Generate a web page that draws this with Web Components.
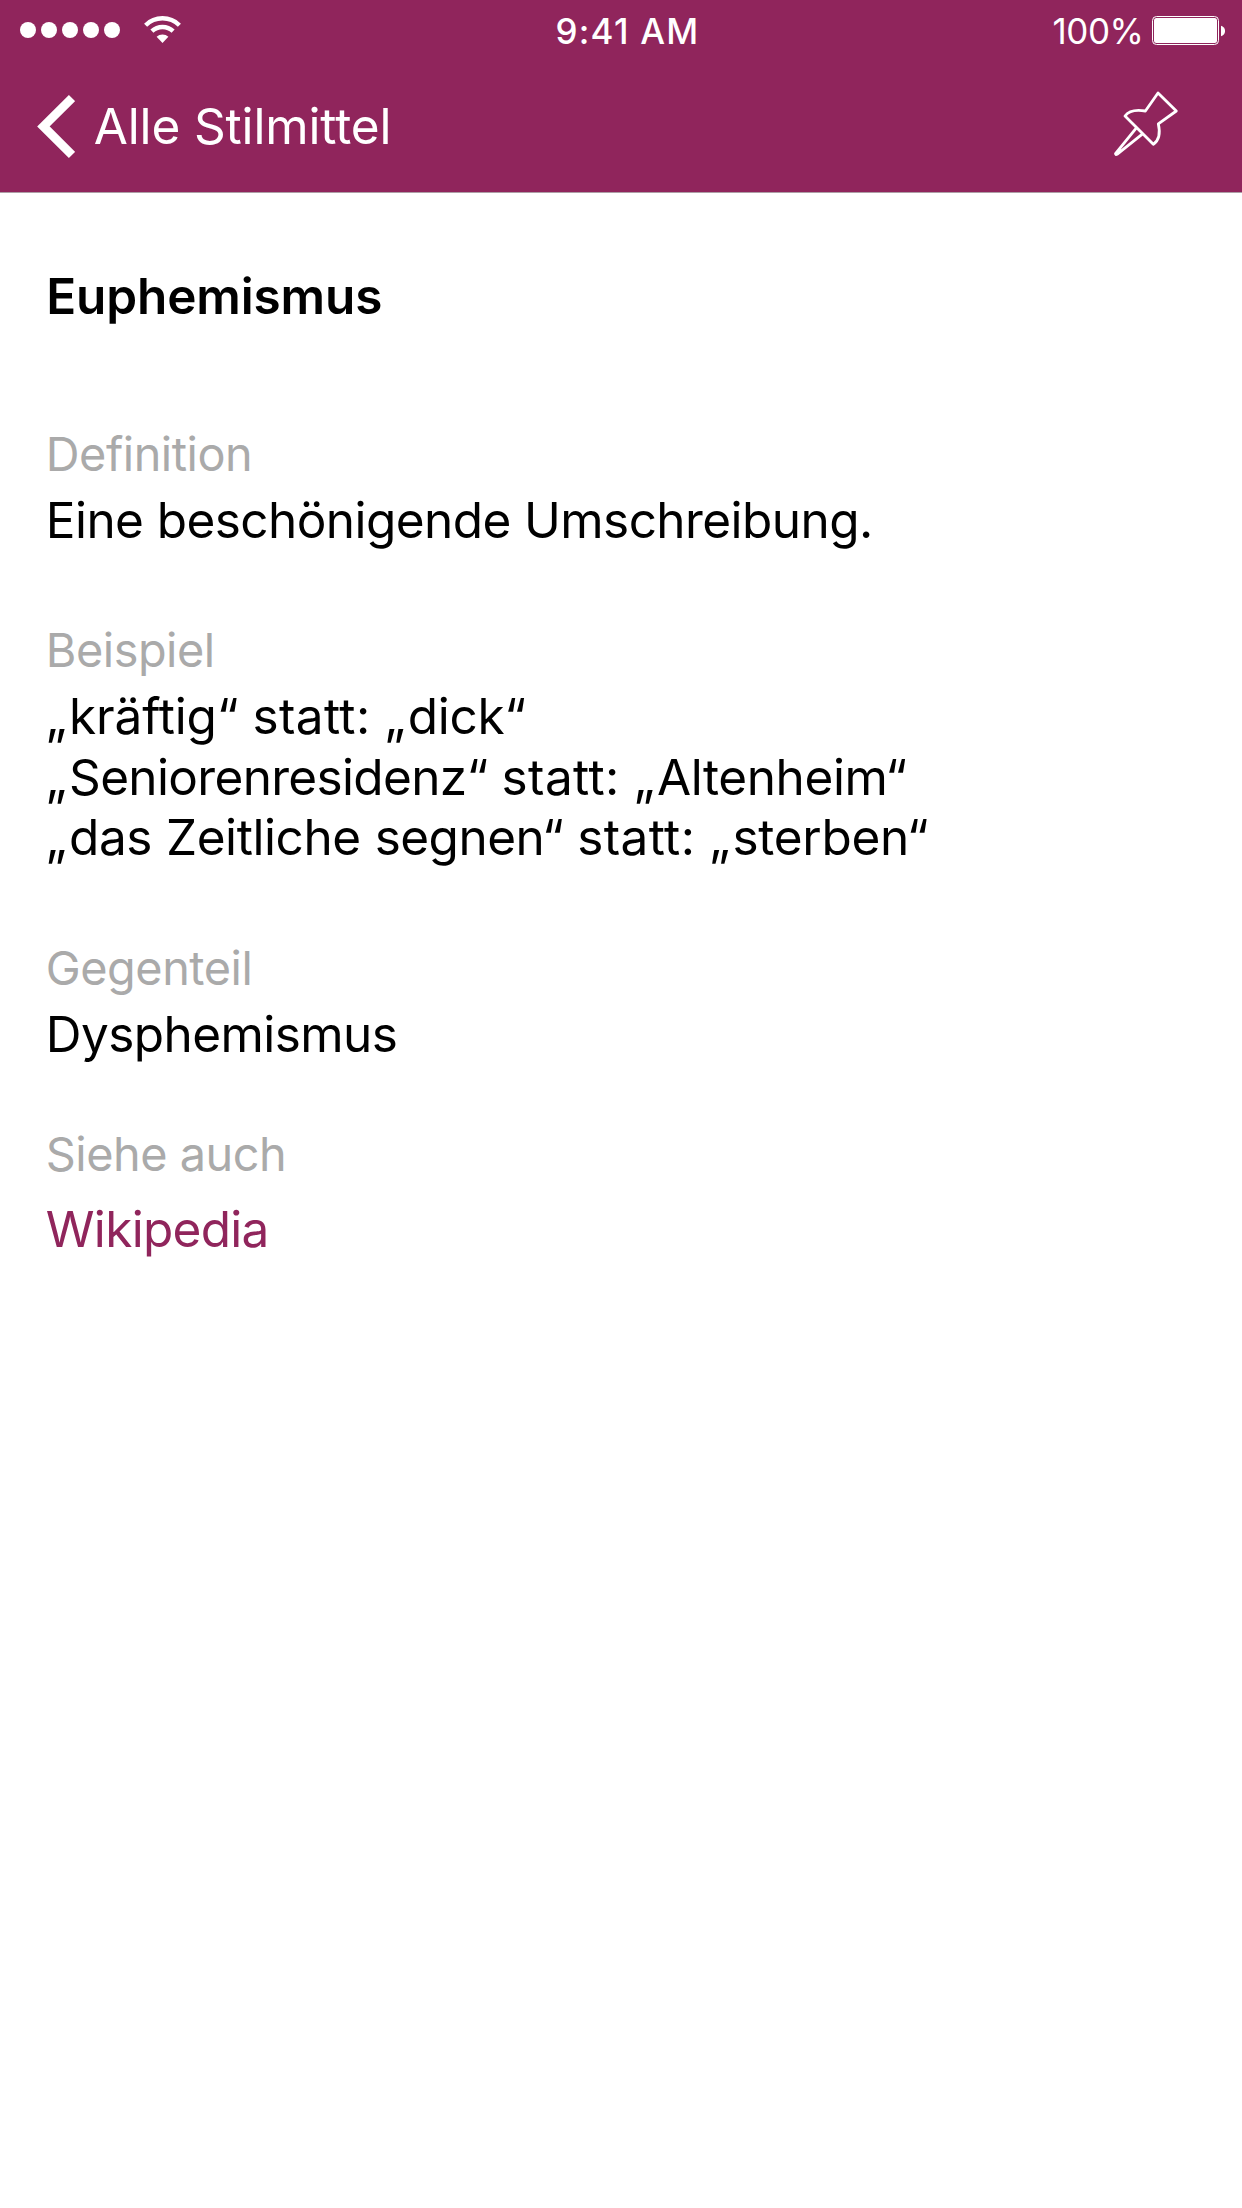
<!DOCTYPE html>
<html lang="de">
<head>
<meta charset="utf-8">
<title>Euphemismus</title>
<style>
html,body{margin:0;background:#fff}
</style>
</head>
<body>
<stil-page>
  <status-bar slot="top" time="9:41 AM" charge="100%"></status-bar>
  <nav-bar slot="top">Alle Stilmittel</nav-bar>
  <entry-title>Euphemismus</entry-title>
  <entry-section label="Definition">Eine beschönigende Umschreibung.</entry-section>
  <entry-section label="Beispiel" style="--gap:70px">
    <quote-line><word-run track="-.14" open>kräftig“</word-run> <word-run track=".4">statt:</word-run> <word-run track="-.3" open>dick“</word-run></quote-line>
    <quote-line><word-run track="-.66" open>Seniorenresidenz“</word-run> <word-run track=".4">statt:</word-run> <word-run track="-.4" open>Altenheim“</word-run></quote-line>
    <quote-line><word-run track="-.43" open>das</word-run> <word-run track="-.42">Zeitliche</word-run> <word-run track="-.52">segnen“</word-run> <word-run track=".4">statt:</word-run> <word-run track="-.29" open>sterben“</word-run></quote-line>
  </entry-section>
  <entry-section label="Gegenteil" style="--gap:70.5px">Dysphemismus</entry-section>
  <entry-section label="Siehe auch" style="--gap:60px;--inner:15px;--ink:#90255c;--track:-.7px">Wikipedia</entry-section>
</stil-page>
<script>
const define=(name,html,setup)=>customElements.define(name,class extends HTMLElement{
  constructor(){
    super();
    const t=document.createElement('template');
    t.innerHTML=html;
    this.attachShadow({mode:'open'}).append(t.content.cloneNode(true));
  }
  connectedCallback(){ if(setup) setup(this,this.shadowRoot); }
});

define('stil-page',`
<style>
:host{display:block;width:1242px;height:2208px;background:#fff;color:#000;font:400 49.5px/60px Inter,"Liberation Sans",sans-serif;white-space:nowrap}
header{background:#90255c;border-bottom:1px solid #ad9fa6;color:#fff;height:192px}
main{padding:73px 45px 0 45.8px}
</style>
<header><slot name="top"></slot></header>
<main><slot></slot></main>`);

define('status-bar',`
<style>
:host{display:grid;grid-template-columns:1fr auto 1fr;height:62px;font-size:35px;line-height:62px}
.left,.right{display:flex;align-items:flex-start}
.left{padding-left:20px}
.right{justify-content:flex-end;padding-right:17px}
.time{font-weight:500;letter-spacing:1.25px;margin-left:13px}
.charge{letter-spacing:-.45px;margin-right:8.5px}
svg{display:block;fill:#fff}
</style>
<div class="left">
<svg width="166" height="62" viewBox="20 0 166 62">
<circle cx="28" cy="30" r="8"/><circle cx="49" cy="30" r="8"/><circle cx="70" cy="30" r="8"/><circle cx="91" cy="30" r="8"/><circle cx="112" cy="30" r="8"/>
<g fill="none" stroke="#fff" stroke-width="4.4"><path d="M145.600 25.200a24.200 24.200 0 0 1 33.800 0"/><path d="M151.900 31.200a15.400 15.400 0 0 1 21.200 0"/></g>
<path d="M156.600 36.800a8.600 8.600 0 0 1 11.800 0L162.500 43z"/>
</svg></div>
<span class="time"></span>
<div class="right"><span class="charge"></span>
<svg width="73" height="62" viewBox="1152 0 73 62">
<rect x="1152.5" y="16.5" width="66" height="28" rx="4" fill="none" stroke="#fff"/>
<rect x="1154" y="18" width="63" height="25" rx="2.5"/>
<path d="M1221 25.800c5.400 1.200 5.400 9.200 0 10.400z"/>
</svg></div>`,(el,r)=>{
  r.querySelector('.time').textContent=el.getAttribute('time');
  r.querySelector('.charge').textContent=el.getAttribute('charge');
});

define('nav-bar',`
<style>
:host{display:flex;align-items:flex-start;height:130px;padding:0 58px 0 37px;letter-spacing:-.14px}
svg{display:block;fill:none;stroke:#fff}
.title{margin:34px auto 0 18.7px}
</style>
<svg width="38" height="130" viewBox="37 62 38 130" stroke-width="8.8"><path d="M72 98 43.400 126.400 72 155"/></svg>
<span class="title"><slot></slot></span>
<svg width="74" height="130" viewBox="1110 62 74 130" stroke-width="2.8" stroke-linejoin="round" stroke-linecap="round">
<path d="M1158 93 1176.300 111 1158.300 123.800C1160 131 1160.300 139.500 1153.300 144.300L1125 116C1129 110.500 1138 109.800 1145.400 111z"/>
<path d="M1136 128.300 1115.500 153.600Q1115.500 155 1117 154.300L1142 134.300"/>
<path d="M1116.500 153.500 1120 150.300"/>
</svg>`);

define('entry-title',`
<style>:host{display:block;font-weight:600;letter-spacing:-.13px;margin-left:.4px}</style>
<slot></slot>`);

define('entry-section',`
<style>
:host{display:block;padding-top:var(--gap,98px)}
.label{font-size:46.8px;letter-spacing:-.46px;color:#aaa;line-height:60px}
.body{margin-top:var(--inner,6px);color:var(--ink,#000);letter-spacing:var(--track,-.57px)}
</style>
<div class="label"></div>
<div class="body"><slot></slot></div>`,(el,r)=>{
  r.querySelector('.label').textContent=el.getAttribute('label');
});

define('quote-line',`
<style>:host{display:block;line-height:60.5px;letter-spacing:0}</style>
<slot></slot>`);

// One word with its own tracking; "open" puts the low opening quote before it.
define('word-run',`
<style>:host{display:inline}.q{letter-spacing:2.4px}</style><span class="q"></span><slot></slot>`,(el,r)=>{
  el.style.letterSpacing=el.getAttribute('track')+'px';
  if(el.hasAttribute('open')) r.querySelector('.q').textContent='„';
});
</script>
</body>
</html>
